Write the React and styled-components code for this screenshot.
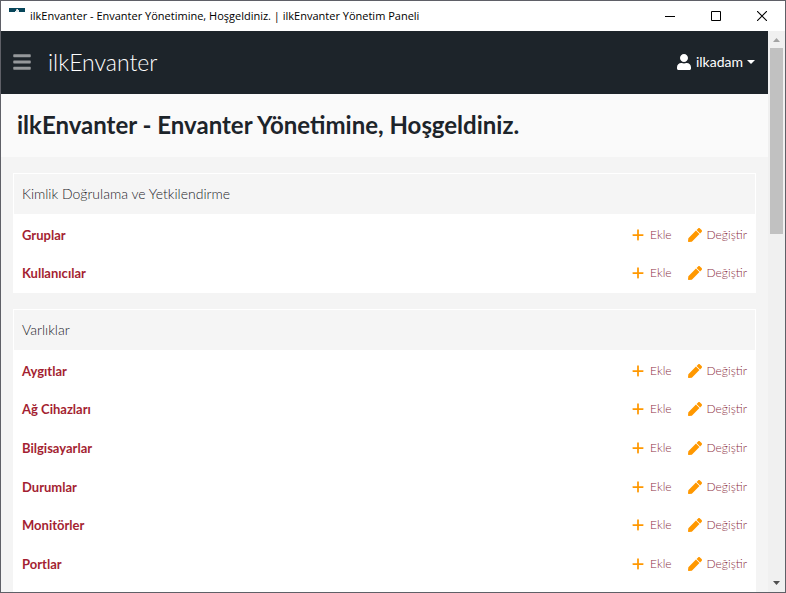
import React from "react";
import styled, { createGlobalStyle } from "styled-components";
import { FaBars, FaUser, FaPen } from "react-icons/fa";
import { FaPlus } from "react-icons/fa6";

const GlobalStyle = createGlobalStyle`
  *, *::before, *::after { box-sizing: border-box; }
  body {
    margin: 0;
    background: #f4f4f4;
    font-family: Lato, sans-serif;
    color: #1d242a;
  }
`;

const Window = styled.div`
  display: flex;
  flex-direction: column;
  height: 100vh;
  border: 1px solid #5f6067;
  overflow: hidden;
`;

const TitleBar = styled.div`
  display: flex;
  align-items: center;
  flex: none;
  height: 30px;
  padding-left: 8px;
  background: #fff;
  color: #000;
`;

const Favicon = styled.svg`
  flex: none;
  width: 16px;
  height: 16px;
  margin-right: 5px;
`;

const WindowTitle = styled.span`
  flex: 1;
  min-width: 0;
  overflow: hidden;
  white-space: nowrap;
  font: 11px/16px "Open Sans", sans-serif;
`;

const WindowButton = styled.button`
  display: flex;
  align-items: center;
  justify-content: center;
  flex: none;
  width: 46px;
  height: 28px;
  padding: 0;
  border: 0;
  background: none;
  color: #000;
`;

const Viewport = styled.div`
  display: flex;
  flex: 1;
  min-height: 0;
`;

const Page = styled.div`
  display: flex;
  flex-direction: column;
  flex: 1;
  min-width: 0;
  overflow: hidden;
`;

const Header = styled.header`
  display: flex;
  align-items: center;
  flex: none;
  height: 63px;
  padding: 0 13px 2px 11px;
  background: #1d242a;
`;

const MenuButton = styled.button`
  display: flex;
  padding: 0;
  border: 0;
  background: none;
  color: #95989b;
`;

const Brand = styled.a`
  margin-left: 16px;
  color: #fff;
  font-size: 23px;
  font-weight: 300;
  line-height: 32px;
  text-decoration: none;
`;

const UserButton = styled.button`
  display: flex;
  align-items: center;
  gap: 4px;
  margin-left: auto;
  padding: 0;
  border: 0;
  background: none;
  color: #fff;
  font-family: inherit;
  font-size: 14px;
  line-height: 24px;
`;

const Caret = styled.span`
  border: 4px solid transparent;
  border-top-color: #fff;
  border-bottom: 0;
`;

const PageTitle = styled.h1`
  flex: none;
  margin: 0;
  padding: 15px 16px 16px;
  background: #fafafa;
  font-size: 24px;
  font-weight: 700;
  line-height: 32px;
  white-space: nowrap;
`;

const Modules = styled.main`
  display: flex;
  flex-direction: column;
  flex: 1;
  gap: 16px;
  padding: 16px 12px 0;
`;

const Card = styled.section`
  flex: ${(p) => (p.$fill ? "1 0 auto" : "none")};
  border: 1px solid #fff;
  background: #fff;
`;

const CardTitle = styled.h2`
  margin: 0;
  padding: 8px;
  background: #f5f5f5;
  color: #1d242a;
  font-size: 14px;
  font-weight: 300;
  line-height: 24px;
`;

const ModelTable = styled.table`
  width: 100%;
  margin-bottom: 1px;
  border-collapse: collapse;
  font-size: 13px;
  line-height: 20px;
`;

const ModelRow = styled.tr`
  height: 39px;

  &:nth-child(3n + 1) {
    height: 38px;
  }
`;

const ModelName = styled.th`
  padding: 3px 8px 0;
  text-align: left;
`;

const ActionsCell = styled.td`
  padding: 3px 8px 0;
  font-size: 12px;
`;

const Actions = styled.div`
  display: flex;
  justify-content: flex-end;
  gap: 16px;
`;

const ModelLink = styled.a`
  color: #a41f32;
  text-decoration: none;
`;

const ActionLink = styled.a`
  display: flex;
  align-items: center;
  gap: 5px;
  color: #8c2f42;
  font-weight: 300;
  text-decoration: none;

  svg {
    color: #ff9800;
  }
`;

const ScrollTrack = styled.div`
  display: flex;
  flex-direction: column;
  align-items: center;
  flex: none;
  width: 17px;
  background: #f0f0f0;
`;

const ScrollArrow = styled.svg`
  flex: none;
  width: 17px;
  height: 17px;
`;

const ScrollLane = styled.div`
  flex: 1;
  width: 13px;
`;

const ScrollThumb = styled.div`
  height: 35.3%;
  background: #c1c1c1;
`;

const groups = [
  { title: "Kimlik Doğrulama ve Yetkilendirme", models: ["Gruplar", "Kullanıcılar"] },
  {
    title: "Varlıklar",
    models: ["Aygıtlar", "Ağ Cihazları", "Bilgisayarlar", "Durumlar", "Monitörler", "Portlar"],
  },
];

function ModelGroup({ title, models, fill }) {
  return (
    <Card $fill={fill}>
      <CardTitle>{title}</CardTitle>
      <ModelTable>
        <tbody>
          {models.map((name) => (
            <ModelRow key={name}>
              <ModelName scope="row">
                <ModelLink href="#">{name}</ModelLink>
              </ModelName>
              <ActionsCell>
                <Actions>
                  <ActionLink href="#">
                    <FaPlus size={14} />
                    Ekle
                  </ActionLink>
                  <ActionLink href="#">
                    <FaPen size={14} />
                    Değiştir
                  </ActionLink>
                </Actions>
              </ActionsCell>
            </ModelRow>
          ))}
        </tbody>
      </ModelTable>
    </Card>
  );
}

export default function App() {
  return (
    <>
      <GlobalStyle />
      <Window>
        <TitleBar>
          <Favicon viewBox="0 0 16 16" aria-hidden="true">
            <path d="M0 0h16v4H0z" fill="#07465a" />
            <path d="M7 1h2v1h1v2H6V3h1z" fill="#e6eaec" />
            <path d="M7 1h1v1H7z" fill="#b9a3a3" />
          </Favicon>
          <WindowTitle>
            ilkEnvanter - Envanter Yönetimine, Hoşgeldiniz. | ilkEnvanter Yönetim Paneli
          </WindowTitle>
          <WindowButton aria-label="Minimize">
            <svg width="10" height="10" viewBox="0 0 10 10">
              <path d="M0 5.5h10" stroke="currentColor" />
            </svg>
          </WindowButton>
          <WindowButton aria-label="Maximize">
            <svg width="10" height="10" viewBox="0 0 10 10">
              <path d="M.5.5h9v9h-9z" fill="none" stroke="currentColor" />
            </svg>
          </WindowButton>
          <WindowButton aria-label="Close">
            <svg width="10" height="10" viewBox="0 0 10 10">
              <path d="M0 0l10 10M10 0L0 10" stroke="currentColor" strokeWidth="1.1" />
            </svg>
          </WindowButton>
        </TitleBar>
        <Viewport>
          <Page>
            <Header>
              <MenuButton aria-label="Menu">
                <FaBars size={20} />
              </MenuButton>
              <Brand href="#">ilkEnvanter</Brand>
              <UserButton>
                <FaUser size={16} />
                ilkadam
                <Caret />
              </UserButton>
            </Header>
            <PageTitle>ilkEnvanter - Envanter Yönetimine, Hoşgeldiniz.</PageTitle>
            <Modules>
              {groups.map((group, i) => (
                <ModelGroup key={group.title} {...group} fill={i === groups.length - 1} />
              ))}
            </Modules>
          </Page>
          <ScrollTrack aria-hidden="true">
            <ScrollArrow viewBox="0 0 17 17">
              <path d="M5 11l3.5-4 3.5 4z" fill="#a3a3a3" />
            </ScrollArrow>
            <ScrollLane>
              <ScrollThumb />
            </ScrollLane>
            <ScrollArrow viewBox="0 0 17 17">
              <path d="M5 6h7l-3.5 4z" fill="#505050" />
            </ScrollArrow>
          </ScrollTrack>
        </Viewport>
      </Window>
    </>
  );
}
